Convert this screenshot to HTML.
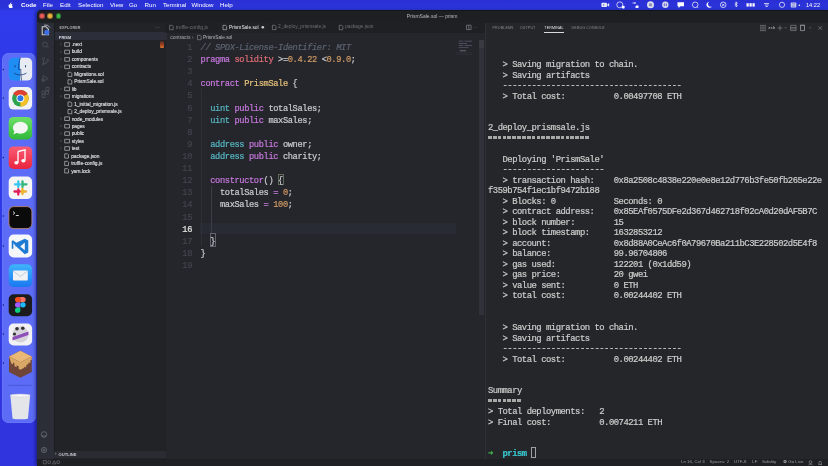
<!DOCTYPE html>
<html><head><meta charset="utf-8">
<style>
*{margin:0;padding:0;box-sizing:border-box}
html,body{width:828px;height:466px;overflow:hidden}
body{position:relative;background:linear-gradient(#2f3bec,#2f38e6 50%,#3034dd);font-family:"Liberation Sans",sans-serif;color:#ccc}
.a{position:absolute}
pre{font-family:"Liberation Mono",monospace;white-space:pre;margin:0}
#menubar{left:0;top:0;width:828px;height:9.5px;background:linear-gradient(#2a30d6,#2a33d9 80%,#2c3ae0)}
.mt{position:absolute;top:1px;font-size:6.2px;line-height:8px;color:#fff;white-space:nowrap}
#dock{left:2px;top:52.6px;width:33.5px;height:370px;background:#5c6cf6;border-radius:7px;box-shadow:inset 0 0 0 0.6px #6d7cf8}
.di{position:absolute;left:8.6px;width:23.4px;height:23px;border-radius:5px}
.dot{position:absolute;left:3px;width:1.4px;height:1.4px;border-radius:1px;background:#1a1f6a}
/* window */
#win{left:36.5px;top:10.3px;width:792px;height:456px;background:#1f2024;border-radius:4px 0 0 0;border-left:0.6px solid #3a3c44;border-top:1.2px solid #141518;box-shadow:-1.5px 0 3px rgba(10,10,60,0.45)}
#title{left:37.1px;top:11.4px;width:791px;height:11.1px;background:#1e1f23;border-radius:3.5px 0 0 0}
.tl{position:absolute;top:13.2px;width:5.5px;height:5.5px;border-radius:50%;border:0.5px solid rgba(0,0,0,0.35)}
#act{left:37px;top:22.5px;width:16.5px;height:436px;background:#2b2d37}
#side{left:53.5px;top:22.5px;width:111.5px;height:436px;background:#212326;border-left:1px solid #1b1c20}
#editor{left:165px;top:22.5px;width:320px;height:436.5px;background:#25262b;border-left:1px solid #202125}
#panel{left:485px;top:22.5px;width:343px;height:436px;background:#252629;border-left:1px solid #2e3036}
#status{left:37px;top:459px;width:791px;height:7px;background:#1f2024}
.ui{position:absolute;font-size:4.6px;line-height:6px;white-space:nowrap;color:#c5c7cc}
#code{left:200.6px;top:42px;font-size:8.7px;letter-spacing:-0.37px;line-height:12.11px;color:#c9ccd1}
#lnums{left:150px;top:42px;width:42px;text-align:right;font-size:8.7px;letter-spacing:-0.37px;line-height:12.11px;color:#41454e}
#term{left:488px;top:60.1px;font-size:8.9px;letter-spacing:-0.49px;line-height:10.513px;color:#cdcdcd}
#term,#code,#lnums{-webkit-text-stroke:0.2px currentColor}
#wrap{position:absolute;left:0;top:0;width:828px;height:466px;overflow:hidden;filter:blur(0.3px);background:linear-gradient(#2f3bec,#2f38e6 50%,#3034dd)}
</style></head><body><div id="wrap">
<div id="menubar" class="a">
<span class="mt" style="left:21px;font-weight:bold">Code</span>
<span class="mt" style="left:43px">File</span>
<span class="mt" style="left:60px">Edit</span>
<span class="mt" style="left:78px">Selection</span>
<span class="mt" style="left:110px">View</span>
<span class="mt" style="left:129px">Go</span>
<span class="mt" style="left:144.5px">Run</span>
<span class="mt" style="left:163px">Terminal</span>
<span class="mt" style="left:191.5px">Window</span>
<span class="mt" style="left:220px">Help</span>
<span class="mt" style="left:806px;font-size:5.6px">14:22</span>
</div>
<div id="dock" class="a"></div>
<div id="win" class="a"></div>
<div id="title" class="a"></div>
<div class="tl" style="left:39.45px;background:#e85c5c"></div>
<div class="tl" style="left:47.45px;background:#ebb33f"></div>
<div class="tl" style="left:55.65px;background:#3eb94b"></div>
<div class="ui" style="left:406.8px;top:12.5px;font-size:5px;color:#b9bbc0">PrismSale.sol — prism</div>
<div id="act" class="a"></div>
<div id="side" class="a"></div>
<div id="editor" class="a"></div>
<div id="panel" class="a"></div>
<div id="status" class="a"></div>
<!-- activity bar icons -->
<svg class="a" style="left:37px;top:22.5px" width="17" height="436" viewBox="0 0 17 436">
 <g fill="none" stroke="#c9cbd2" stroke-width="0.9">
  <path d="M5.2 3.8h3.8l2.4 2.4v5.5H5.2z" stroke-width="1.1"/><path d="M7 2.2h3.5l2.4 2.4" stroke-width="0.8"/>
 </g>
 <circle cx="9.8" cy="9.3" r="2.6" fill="#3d6ee8"/>
 <g fill="none" stroke="#4b4e57" stroke-width="0.9">
  <circle cx="8" cy="21.5" r="2.4"/><path d="M9.7 23.2l2 2"/>
  <circle cx="6.5" cy="35.5" r="1"/><circle cx="6.5" cy="41" r="1"/><circle cx="10.5" cy="37.5" r="1"/><path d="M6.5 36.5v3.5 M10.5 38.5c0 1.5-2 2-4 2"/>
  <path d="M6 52.5l5 3-5 3z"/><circle cx="6" cy="57" r="1.2"/>
  <path d="M5 68h3v3H5z M8.5 68h3v3h-3z M5 71.5h3v3H5z M9 64.5h3v3H9z"/>
 </g>
 <g fill="none" stroke="#6a6d76" stroke-width="0.8">
  <circle cx="7" cy="411.5" r="2.8"/><path d="M5 412.5c1 .8 3 .8 4 0"/>
  <circle cx="7" cy="427" r="2.6"/><circle cx="7" cy="427" r="1"/>
 </g>
</svg>
<!-- sidebar -->
<div class="ui" style="left:59.4px;top:25.3px;font-size:3.7px;font-weight:bold;color:#a9acb3;letter-spacing:0.1px">EXPLORER</div>
<div class="ui" style="left:155px;top:23.5px;font-size:5px;color:#8a8c94">···</div>
<div class="a" style="left:54.5px;top:32.3px;width:112px;height:7.6px;background:#2c2e3a"></div>
<div class="ui" style="left:58.8px;top:34.5px;font-size:3.9px;font-weight:bold;color:#d8dae0">PRISM</div>
<div class="a" style="left:159.5px;top:41px;width:4.6px;height:6.8px;border-radius:1.2px;background:linear-gradient(#4a2a22,#a8451e 60%,#e07a36)"></div>
<svg class="a" style="left:54px;top:40px" width="111" height="135" viewBox="0 0 111 135">
 <g fill="none" stroke="#70737b" stroke-width="0.55">
  <path d="M6.4 3.4l.9 1-.9 1 M6.4 10.85l.9 1-.9 1 M6.4 18.3l.9 1-.9 1 M5.8 26.3l1 .9 1-.9 M6.4 47.75l.9 1-.9 1 M5.8 55.7l1 .9 1-.9 M6.4 77.6l.9 1-.9 1 M6.4 85.1l.9 1-.9 1 M6.4 92.5l.9 1-.9 1 M6.4 100l.9 1-.9 1 M6.4 107.4l.9 1-.9 1"/>
 </g>
 <g fill="none" stroke="#b0b3ba" stroke-width="0.75">
  <path d="M10.7 2.7h4.8v3.6h-4.8z M10.7 10.15h4.8v3.6h-4.8z M10.7 17.6h4.8v3.6h-4.8z M10.7 25.05h4.8v3.6h-4.8z"/>
  <path d="M14 32.3h2.8l1 1v3.3H14z M14 39.75h2.8l1 1v3.3H14z"/>
  <path d="M10.7 47.1h4.8v3.6h-4.8z M10.7 54.55h4.8v3.6h-4.8z"/>
  <path d="M14 62h2.8l1 1v3.3H14z M14 69.45h2.8l1 1v3.3H14z"/>
  <path d="M10.7 76.9h4.8v3.6h-4.8z M10.7 84.4h4.8v3.6h-4.8z M10.7 91.8h4.8v3.6h-4.8z M10.7 99.3h4.8v3.6h-4.8z M10.7 106.7h4.8v3.6h-4.8z"/>
  <path d="M10.7 113.8h2.8l1 1v3.3h-3.8z M10.7 121.3h2.8l1 1v3.3h-3.8z M10.7 128.7h2.8l1 1v3.3h-3.8z"/>
 </g>
</svg>
<div class="ui" style="left:71.7px;top:41px;font-size:4.8px;line-height:7.45px;color:#d5d7dc;-webkit-text-stroke:0.18px #d5d7dc">.next<br>build<br>components<br>contracts</div>
<div class="ui" style="left:74.2px;top:70.8px;font-size:4.8px;line-height:7.45px;color:#d5d7dc;-webkit-text-stroke:0.18px #d5d7dc">Migrations.sol<br>PrismSale.sol</div>
<div class="ui" style="left:71.7px;top:85.7px;font-size:4.8px;line-height:7.45px;color:#d5d7dc;-webkit-text-stroke:0.18px #d5d7dc">lib<br>migrations</div>
<div class="ui" style="left:74.2px;top:100.6px;font-size:4.8px;line-height:7.45px;color:#d5d7dc;-webkit-text-stroke:0.18px #d5d7dc">1_initial_migration.js<br>2_deploy_prismsale.js</div>
<div class="ui" style="left:71.7px;top:115.5px;font-size:4.8px;line-height:7.45px;color:#d5d7dc;-webkit-text-stroke:0.18px #d5d7dc">node_modules<br>pages<br>public<br>styles<br>test</div>
<div class="ui" style="left:71.2px;top:152.7px;font-size:4.8px;line-height:7.45px;color:#d5d7dc;-webkit-text-stroke:0.18px #d5d7dc">package.json<br>truffle-config.js<br>yarn.lock</div>
<!-- outline -->
<div class="a" style="left:53.5px;top:450.6px;width:112px;height:7.5px;background:#2a2c33"></div>
<div class="ui" style="left:55px;top:451.3px;font-size:4.6px;color:#9ea1aa">›</div>
<div class="ui" style="left:58.6px;top:451.6px;font-size:4.1px;font-weight:bold;color:#c4c6cc">OUTLINE</div>

<!-- tabs -->
<div class="a" style="left:165px;top:22.5px;width:320px;height:10px;background:#1f2024"></div>
<div class="a" style="left:218px;top:22.5px;width:51px;height:10px;background:#212226"></div>
<svg class="a" style="left:165px;top:21.9px" width="320" height="20" viewBox="0 0 320 20">
 <g fill="none" stroke="#8d9098" stroke-width="0.6">
  <path d="M4.6 3.3h2.6l1 1v3.4H4.6z"/>
  <path d="M58 3.3h2.6l1 1v3.4H58z" stroke="#c6c8ce"/>
  <path d="M107.4 3.3h2.6l1 1v3.4h-3.6z"/>
  <path d="M174.2 3.3h2.6l1 1v3.4h-3.6z"/>
  <path d="M32.5 13.3h2.6l1 1v3.4h-3.6z"/>
  <path d="M301.5 3.2h4.6v4.4h-4.6z M303.8 3.2v4.4"/>
 </g>
 <circle cx="97.8" cy="5.2" r="1.3" fill="#d0d2d6"/>
</svg>
<div class="ui" style="left:175.7px;top:24.4px;font-size:5px;color:#6d7078">truffle-config.js</div>
<div class="ui" style="left:229px;top:24.6px;font-size:4.85px;color:#e6e8ec">PrismSale.sol</div>
<div class="ui" style="left:278px;top:24.4px;font-size:4.85px;color:#6d7078">2_deploy_prismsale.js</div>
<div class="ui" style="left:345px;top:24.4px;font-size:4.85px;color:#6d7078">package.json</div>
<div class="ui" style="left:473px;top:23.5px;font-size:5px;color:#7d8088">···</div>
<!-- breadcrumbs -->
<div class="ui" style="left:170.2px;top:34.2px;font-size:5px;color:#a8abb2">contracts <span style="font-size:4.4px">›</span></div>
<div class="ui" style="left:203px;top:34.6px;font-size:4.8px;color:#b8bbc2">PrismSale.sol</div>
<!-- current line -->
<div class="a" style="left:200px;top:222.6px;width:255.5px;height:11.8px;background:#282b34"></div>
<!-- indent guides -->
<div class="a" style="left:211.2px;top:186px;width:0.6px;height:48px;background:#3b3e46"></div>
<div class="a" style="left:200.8px;top:89px;width:0.6px;height:157px;background:#2e3037"></div>
<!-- bracket boxes -->
<div class="a" style="left:278.2px;top:173.5px;width:5.6px;height:11px;border:0.7px solid #5d6b58"></div>
<div class="a" style="left:209.8px;top:233px;width:5.9px;height:13.5px;border:0.7px solid #62656e"></div>
<!-- minimap -->
<svg class="a" style="left:452px;top:36px" width="30" height="24" viewBox="0 0 30 24">
 <g stroke-width="1">
  <path d="M6.7 5.2h4.5 M12.5 5.2h7.5" stroke="#4b4d5a"/>
  <path d="M6.7 7.5h8.3" stroke="#4b4d5a"/>
  <path d="M6.7 9.5h4.5 M12.5 9.5h7.5" stroke="#4b4d5a"/>
  <path d="M6.7 11.6h9.8" stroke="#4b4d5a"/>
  <path d="M7.7 14.7h6.3" stroke="#5c5f6b" stroke-width="1.2"/>
  <path d="M4 16.8h16 M4 18.3h16" stroke="#30323a" stroke-width="0.8"/>
 </g>
</svg>
<!-- scrollbar -->
<div class="a" style="left:479px;top:40px;width:5.3px;height:275px;background:#30313a"></div>
<div class="a" style="left:479px;top:40px;width:5.3px;height:8.1px;background:#3a3b42"></div>

<div class="ui" style="left:492.5px;top:24.6px;font-size:3.6px;color:#8a8d95;letter-spacing:0.15px">PROBLEMS</div>
<div class="ui" style="left:519.8px;top:24.6px;font-size:3.6px;color:#8a8d95;letter-spacing:0.15px">OUTPUT</div>
<div class="ui" style="left:544.3px;top:24.6px;font-size:3.6px;color:#e4e6ea;letter-spacing:0.15px">TERMINAL</div>
<div class="a" style="left:544.3px;top:31.6px;width:19.6px;height:0.8px;background:#d8dade"></div>
<div class="ui" style="left:571.6px;top:24.6px;font-size:3.6px;color:#8a8d95;letter-spacing:0.15px">DEBUG CONSOLE</div>
<svg class="a" style="left:758px;top:23px" width="68" height="10" viewBox="0 0 68 10">
 <g fill="none" stroke="#8a8d95" stroke-width="0.6">
  <path d="M2.8 1.8v6.6 M5 1.8v6.6 M7.2 1.8v6.6 M2.3 2.6h5.4 M2.3 5h5.4 M2.3 7.4h5.4" stroke-width="0.5"/>
  <path d="M22 2.5v5 M19.5 5h5"/>
  <path d="M26.8 4.3l0.9 0.9 0.9-0.9"/>
  <path d="M32.6 2.3h5.5v5.3h-5.5z M32.6 4.5h5.5 M32.6 6h5.5"/>
  <path d="M42.5 2.3h4v5.3h-4z M42 2.3h5" stroke-width="0.9"/>
  <path d="M51.3 5.3l0.9-0.9 0.9 0.9"/>
  <path d="M60.5 3.2l3.5 3.5 M64 3.2l-3.5 3.5"/>
 </g>
</svg>
<div class="ui" style="left:768.3px;top:25px;font-size:4.2px;font-weight:bold;color:#9a9da5">zsh</div>
<!-- status bar -->
<svg class="a" style="left:37px;top:458.5px" width="30" height="8" viewBox="0 0 30 8">
 <g fill="none" stroke="#80838b" stroke-width="0.55">
  <path d="M6.3 1.5h3v3.4h-3z"/>
  <circle cx="12.2" cy="3.2" r="1.5"/>
  <path d="M15.5 4.9l1.7-3.2 1.7 3.2z"/>
  <circle cx="21.2" cy="3.2" r="1.5"/>
 </g>
</svg>
<div class="ui" style="left:681px;top:458.9px;font-size:4.4px;color:#9a9da5;word-spacing:0px">Ln 16, Col 3</div>
<div class="ui" style="left:709.6px;top:458.9px;font-size:4.4px;color:#9a9da5">Spaces: 2</div>
<div class="ui" style="left:734px;top:458.9px;font-size:4.4px;color:#9a9da5">UTF-8</div>
<div class="ui" style="left:752.3px;top:458.9px;font-size:4.4px;color:#9a9da5">LF</div>
<div class="ui" style="left:762px;top:458.9px;font-size:4.4px;color:#9a9da5">Solidity</div>
<div class="ui" style="left:783px;top:458.9px;font-size:4.4px;color:#9a9da5">⦿ Go Live</div>
<svg class="a" style="left:805px;top:458.5px" width="23" height="8" viewBox="0 0 23 8">
 <g fill="none" stroke="#9a9da5" stroke-width="0.6">
  <circle cx="5.5" cy="3.2" r="1.4"/><path d="M3.5 6c.5-1 3.5-1 4 0"/>
  <path d="M13.5 5.5h3.4 M14 5.5V3.5a1.2 1.2 0 0 1 2.4 0v2"/>
 </g>
</svg>

<svg class="a" style="left:0;top:50px" width="37" height="380" viewBox="0 50 37 380">
 <defs>
  <linearGradient id="gfind" x1="0" x2="1"><stop offset="0.5" stop-color="#1e8ef5"/><stop offset="0.5" stop-color="#e8ecf2"/></linearGradient>
  <linearGradient id="gmsg" x1="0" y1="0" x2="0" y2="1"><stop offset="0" stop-color="#6ee06a"/><stop offset="1" stop-color="#2fb83a"/></linearGradient>
  <linearGradient id="gmus" x1="0" y1="0" x2="0" y2="1"><stop offset="0" stop-color="#fb5c74"/><stop offset="1" stop-color="#e9243f"/></linearGradient>
  <linearGradient id="gmail" x1="0" y1="0" x2="0" y2="1"><stop offset="0" stop-color="#3fb4fb"/><stop offset="1" stop-color="#1a78f0"/></linearGradient>
 </defs>
 <!-- running dots -->
 <g fill="#1b2170">
  <circle cx="3.3" cy="69.5" r="0.75"/><circle cx="3.3" cy="98" r="0.75"/><circle cx="3.3" cy="157.5" r="0.75"/>
  <circle cx="3.3" cy="216" r="0.75"/><circle cx="3.3" cy="246" r="0.75"/><circle cx="3.3" cy="305" r="0.75"/>
  <circle cx="3.3" cy="334" r="0.75"/><circle cx="3.3" cy="363" r="0.75"/>
 </g>
 <!-- finder -->
 <rect x="8.7" y="57.8" width="23.4" height="22.8" rx="5" fill="url(#gfind)"/>
 <path d="M20.4 57.8c-1.5 4-2 7.5-1.8 11.5h2.3c-.3 3 0 6 .6 11.3" fill="none" stroke="#1a3b7a" stroke-width="0.8"/>
 <path d="M14 73c3 2.5 9 2.5 12.5 0" fill="none" stroke="#1a3b7a" stroke-width="0.8"/>
 <path d="M15 65.3v2 M25.5 65.3v2" stroke="#1a3b7a" stroke-width="1"/>
 <!-- chrome -->
 <rect x="8.7" y="87" width="23.4" height="22.6" rx="5" fill="#f1f2f4"/>
 <circle cx="20.4" cy="98.3" r="8.3" fill="#2ea44f"/>
 <path d="M20.4 98.3L13.2 94.1A8.3 8.3 0 0 1 27.6 94.1z" fill="#e0402f"/>
 <path d="M20.4 98.3L27.6 94.1A8.3 8.3 0 0 1 20.4 106.6z" fill="#f6c028"/>
 <circle cx="20.4" cy="98.3" r="3.9" fill="#fff"/><circle cx="20.4" cy="98.3" r="3" fill="#2b76e8"/>
 <!-- messages -->
 <rect x="8.7" y="116.9" width="23.4" height="22.6" rx="5" fill="url(#gmsg)"/>
 <ellipse cx="20.4" cy="127.8" rx="7.5" ry="6" fill="#f4f6f4"/>
 <path d="M14.5 131l-1.2 3.5 4-2z" fill="#f4f6f4"/>
 <!-- music -->
 <rect x="8.7" y="146.4" width="23.4" height="22.6" rx="5" fill="url(#gmus)"/>
 <path d="M18 151.5l7-1.6v10.6 M18 151.5v11" fill="none" stroke="#fff" stroke-width="1.3"/>
 <ellipse cx="16.4" cy="162.8" rx="2.1" ry="1.7" fill="#fff"/><ellipse cx="23.4" cy="160.8" rx="2.1" ry="1.7" fill="#fff"/>
 <!-- slack -->
 <rect x="8.7" y="176.5" width="23.4" height="22.6" rx="5" fill="#f5f5f5"/>
 <g stroke-width="2.3" stroke-linecap="round">
  <path d="M18.3 181.5v5.5" stroke="#36c5f0"/><path d="M15 184.3h5" stroke="#36c5f0"/>
  <path d="M22.5 181.5v5.5" stroke="#2eb67d"/><path d="M22.5 184.3h4" stroke="#2eb67d"/>
  <path d="M22.5 189v5" stroke="#ecb22e"/><path d="M21 191.5h5" stroke="#ecb22e"/>
  <path d="M18.3 189.5v5" stroke="#e01e5a"/><path d="M14.5 191.5h5" stroke="#e01e5a"/>
 </g>
 <!-- terminal -->
 <rect x="8.9" y="206.6" width="23" height="22" rx="5" fill="#0b0b0c" stroke="#c98f78" stroke-width="0.8"/>
 <path d="M13 211.5l1.8 1.5-1.8 1.5 M15.8 215.5h3" fill="none" stroke="#eee" stroke-width="0.9"/>
 <!-- vscode -->
 <rect x="8.7" y="234.5" width="23.4" height="23" rx="5" fill="#f6f7f8"/>
 <path d="M24.8 238.8l3.5 1.6v12.2l-3.5 1.6-8.5-7.7-3.3 2.6-1.3-.7v-7.5l1.3-.7 3.3 2.6z" fill="#1f7ad4"/>
 <path d="M24.8 242.6v7.6l-4.6-3.8z M13.4 243.3v6.2l2.6-3.1z" fill="#f6f7f8"/>
 <!-- mail -->
 <rect x="8.7" y="264.3" width="23.4" height="22.6" rx="5" fill="url(#gmail)"/>
 <rect x="13" y="270.5" width="14.8" height="10" rx="1" fill="#f0f2f4"/>
 <path d="M13.3 271l7.1 5.5 7.1-5.5" fill="none" stroke="#9ab3d0" stroke-width="0.6"/>
 <!-- figma -->
 <rect x="8.7" y="294.2" width="23.4" height="22" rx="5" fill="#1c1c1e"/>
 <path d="M17.6 296.9h2.7v5.3h-2.7a2.65 2.65 0 0 1 0-5.3z" fill="#f24e1e"/>
 <path d="M20.3 296.9h2.7a2.65 2.65 0 0 1 0 5.3h-2.7z" fill="#ff7262"/>
 <path d="M17.6 302.2h2.7v5.3h-2.7a2.65 2.65 0 0 1 0-5.3z" fill="#a259ff"/>
 <circle cx="23" cy="304.85" r="2.65" fill="#1abcfe"/>
 <path d="M17.6 307.5h2.7v2.65a2.65 2.65 0 1 1-2.7-2.65z" fill="#0acf83"/>
<!-- app (sequel) -->
 <rect x="8.7" y="323.6" width="23.4" height="21.8" rx="5" fill="#f2f2f4"/>
 <circle cx="20.4" cy="334.5" r="8" fill="#d6d2da"/>
 <path d="M12.5 337l16-5.5v3.5l-16 5.5z" fill="#8e4fb8"/>
 <circle cx="17" cy="328.8" r="1.8" fill="#333"/><circle cx="22.8" cy="328.3" r="1.8" fill="#333"/><circle cx="14.5" cy="334" r="1.6" fill="#333"/>
 <!-- block -->
 <path d="M20.4 350.8l11.4 5.6v15.6l-11.4 5.8-11.4-5.8v-15.6z" fill="#6e4538"/>
 <path d="M20.4 350.8l11.4 5.6-11.4 5.8-11.4-5.8z" fill="#e9b877"/>
 <path d="M9 356.4l11.4 5.8 11.4-5.8v3.2l-1.5 .8v2.8l-1.8-.9v1.6l-2.2 1.1v2.5l-2-1v1.2l-3.9 2-1.8-.9v-2.6l-2-1v2l-2.2-1.1v-2.8l-1.5-.8v2l-1.5-.8z" fill="#d9a766"/>
 <!-- separator -->
 <path d="M8.4 385.4h23" stroke="#3c4cc8" stroke-width="0.6"/>
 <!-- trash -->
 <path d="M10.3 394.8h19.9l-2.2 23.5c-.3.8-2.5 1-7.7 1s-7.5-.2-7.8-1z" fill="#e4e5e8"/>
 <ellipse cx="20.25" cy="395.5" rx="9.9" ry="1.4" fill="#f5f6f8" stroke="#c9cbd2" stroke-width="0.4"/>
</svg>

<svg class="a" style="left:0;top:0" width="828" height="10" viewBox="0 0 828 10">
 <!-- apple -->
 <path d="M10.3 3.1c.5-.6.8-1.3.7-2-.6 0-1.3.4-1.7.9-.4.4-.7 1.1-.6 1.8.6 0 1.2-.3 1.6-.7z M11.9 6.3c0-1.1.9-1.6.9-1.7-.5-.7-1.2-.8-1.5-.8-.6-.1-1.2.4-1.6.4-.3 0-.8-.3-1.4-.3-.7 0-1.4.4-1.8 1.1-.8 1.3-.2 3.3.5 4.4.4.5.8 1.1 1.4 1 .6 0 .8-.3 1.4-.3.7 0 .9.3 1.5.3.6 0 1-.5 1.3-1.1.4-.6.6-1.2.6-1.2s-1.3-.5-1.3-1.8z" fill="#fff" transform="translate(4.85,1.84) scale(0.6)"/>
 <g fill="none" stroke="#fff" stroke-width="0.7">
  <!-- video -->
  
  <!-- circle w badge -->
  <circle cx="619.8" cy="4.8" r="3"/>
  <!-- transfer -->
  <path d="M632.5 3h3 M634.5 2l1 1-1 1 M638.5 7h-3 M636.5 6l-1 1 1 1"/>
  <!-- pause circle -->
  
  <!-- Q circle -->
  <circle cx="695.2" cy="4.8" r="2.8"/><path d="M697 6.8l1 1"/>
  <!-- x circle -->
  <circle cx="723.2" cy="4.8" r="2.8"/><path d="M722 3.6l2.4 2.4 M724.4 3.6L722 6"/>
  <!-- bluetooth -->
  <path d="M735 3.2l2.3 2.6-1.2 1.2V1.8l1.2 1.2-2.3 2.6"/>
  <!-- wifi lines -->
  <path d="M764 3.5h5 M764.8 5h3.8 M765.6 6.5h2.2"/>
  <!-- sync -->
  <circle cx="782" cy="4.8" r="2.6"/>
 </g>
 <g fill="#fff">
  <rect x="622" y="5.8" width="2.6" height="2.6" rx="0.6"/>
  <rect x="636" y="5.5" width="2.4" height="2.4"/>
  <circle cx="650.5" cy="4.8" r="3.5" fill="#dfe1f0"/>
  <circle cx="665.3" cy="4.8" r="3.2" fill="#d6d9f0"/>
  <rect x="601.4" y="2.8" width="5.6" height="4.2" rx="0.8" fill="#e6e8f5"/><path d="M607.4 4.3l1.8-1.2v3.6l-1.8-1.2z" fill="#e6e8f5"/>
  <path d="M677.5 2.3h6.5v4h-3.5l-2 1.6v-1.6h-1z"/>
  <path d="M709.4 1.8a3 3 0 1 0 2.6 4.6 2.6 2.6 0 0 1-2.6-4.6z"/>
  <rect x="746.5" y="3.2" width="2.2" height="3.4"/><rect x="749.5" y="3.2" width="2.2" height="3.4"/><rect x="752.5" y="3.2" width="2.2" height="3.4"/>
  <rect x="790.8" y="2.4" width="5.5" height="5.2" rx="0.8" fill="#cfd2ee"/><path d="M791.8 3.9h3.5 M791.8 6.1h3.5" stroke="#3a40c0" stroke-width="0.6"/>
  <circle cx="799.3" cy="5.2" r="0.8"/>
 </g>
 <rect x="648.9" y="3.3" width="3.2" height="3" fill="#8c90b8"/><path d="M664.3 3.4v2.8 M666.3 3.4v2.8" stroke="#3a40c0" stroke-width="0.8"/><path d="M602.8 4.9l1.3-.9v1.8z" fill="#3a40c0"/>
</svg>


<pre id="lnums" class="a">
1
2
3
4
5
6
7
8
9
10
11
12
13
14
15
<span style="color:#e6e6e6">16</span>
17
18
19</pre>
<pre id="code" class="a">
<i style="color:#5c6370">// SPDX-License-Identifier: MIT</i>
<span style="color:#c678dd">pragma</span> <span style="color:#e06c75">solidity</span> &gt;=<span style="color:#d19a66">0.4.22</span> &lt;<span style="color:#d19a66">0.9.0</span>;

<span style="color:#c678dd">contract</span> <span style="color:#e5c07b">PrismSale</span> {

  <span style="color:#56b6c2">uint</span> <span style="color:#c678dd">public</span> totalSales;
  <span style="color:#56b6c2">uint</span> <span style="color:#c678dd">public</span> maxSales;

  <span style="color:#56b6c2">address</span> <span style="color:#c678dd">public</span> owner;
  <span style="color:#56b6c2">address</span> <span style="color:#c678dd">public</span> charity;

  <span style="color:#c678dd">constructor</span>() {
    totalSales <span style="color:#c678dd">=</span> <span style="color:#d19a66">0</span>;
    maxSales <span style="color:#c678dd">=</span> <span style="color:#d19a66">100</span>;


  }
}
</pre>
<pre id="term" class="a">
   &gt; Saving migration to chain.
   &gt; Saving artifacts
   -------------------------------------
   &gt; Total cost:          0.00497708 ETH


2_deploy_prismsale.js
                     

   Deploying 'PrismSale'
   ---------------------
   &gt; transaction hash:    0x8a2508c4838e220e0e8e12d776b3fe50fb265e22e
f359b754f1ec1bf9472b188
   &gt; Blocks: 0            Seconds: 0
   &gt; contract address:    0x85EAf0575DFe2d367d462718f02cA0d20dAF5B7C
   &gt; block number:        15
   &gt; block timestamp:     1632853212
   &gt; account:             0x8d88A0CeAc6f0A79670Ba211bC3E228502d5E4f8
   &gt; balance:             99.96704806
   &gt; gas used:            122201 (0x1dd59)
   &gt; gas price:           20 gwei
   &gt; value sent:          0 ETH
   &gt; total cost:          0.00244402 ETH


   &gt; Saving migration to chain.
   &gt; Saving artifacts
   -------------------------------------
   &gt; Total cost:          0.00244402 ETH


Summary
       
&gt; Total deployments:   2
&gt; Final cost:          0.0074211 ETH


<span style="color:#3fb950">➜</span>  <b style="color:#39c5cf">prism</b></pre>
<div class="a" style="left:488px;top:136.3px;width:101.6px;height:2.8px;background:repeating-linear-gradient(90deg,#a8a8a8 0 3.7px,transparent 3.7px 4.85px)"></div>
<div class="a" style="left:488px;top:399px;width:33.7px;height:2.8px;background:repeating-linear-gradient(90deg,#a8a8a8 0 3.7px,transparent 3.7px 4.85px)"></div>
<div class="a" style="left:531.3px;top:447.4px;width:5.2px;height:10.8px;border:0.8px solid #a0a0a0"></div>
</div></body></html>
